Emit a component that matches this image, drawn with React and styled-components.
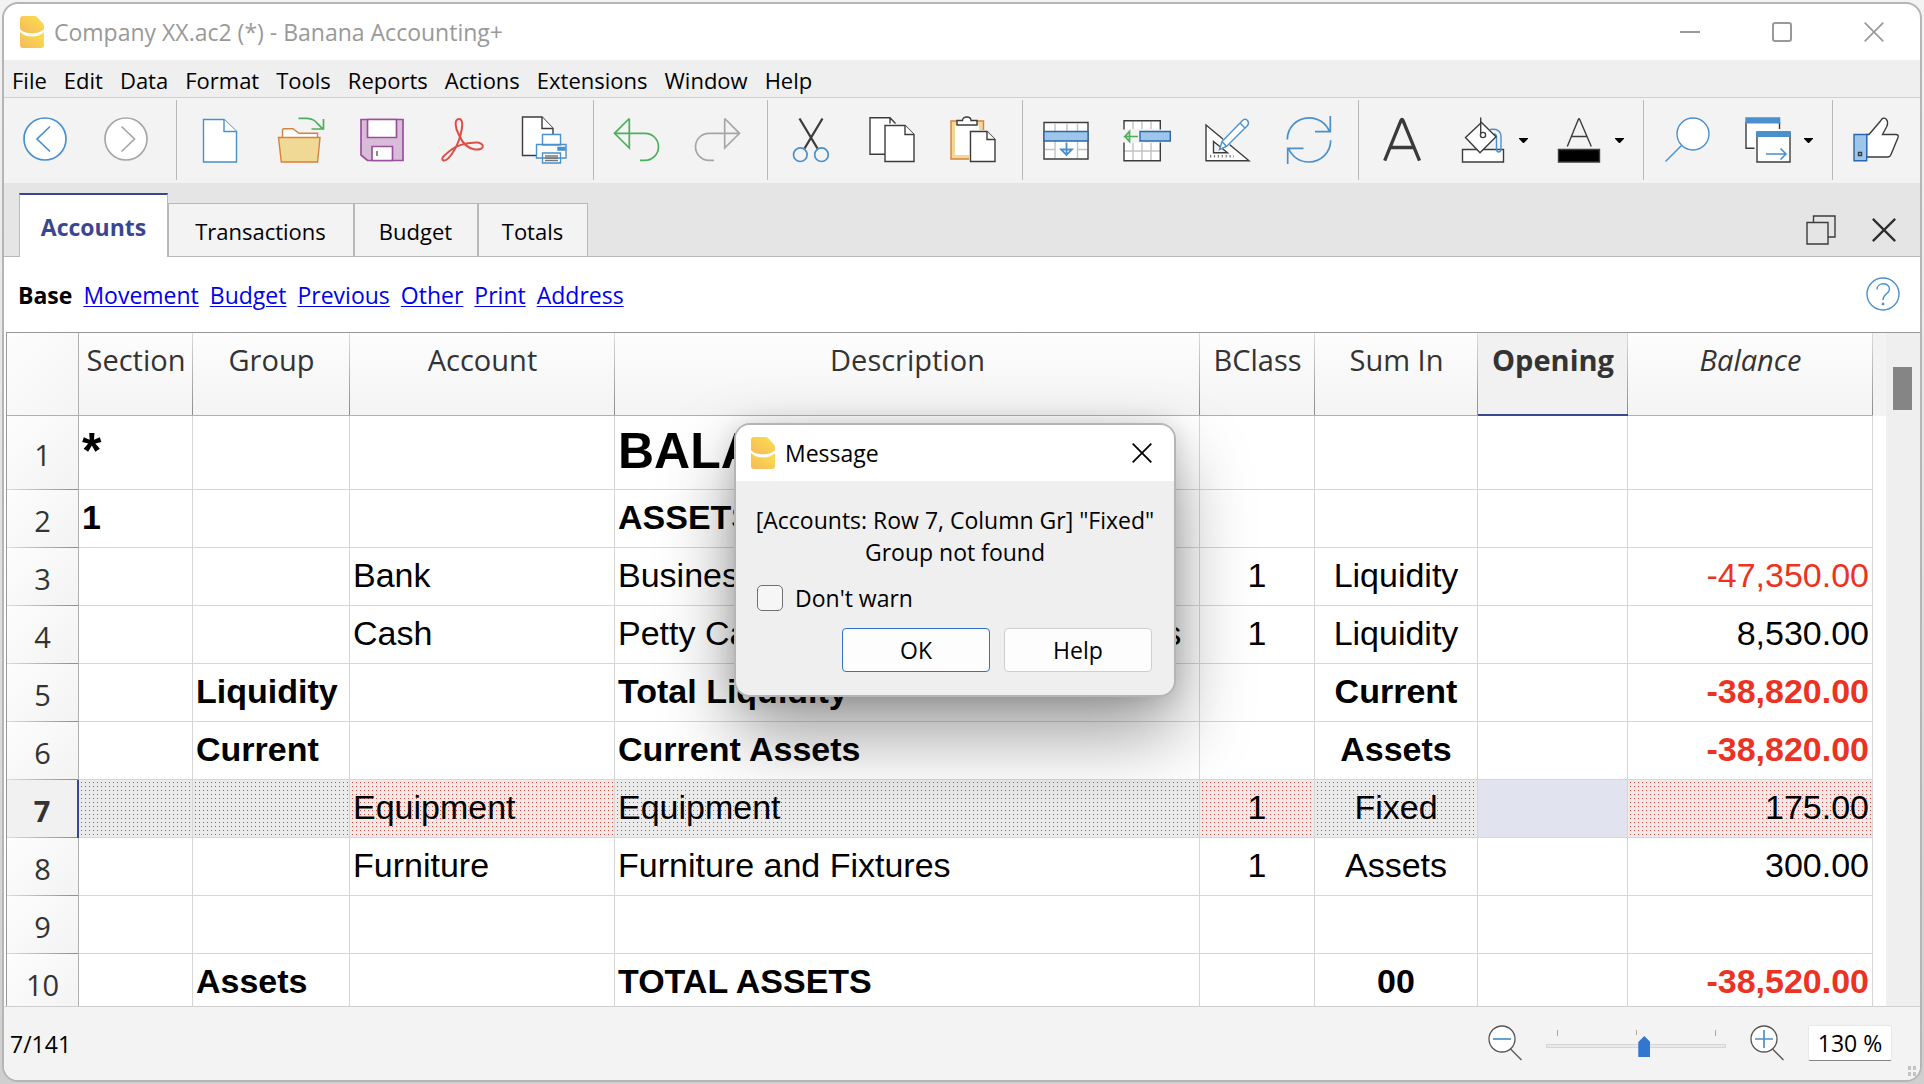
import React, { useState } from "react";
import styled, { createGlobalStyle, css } from "styled-components";

const UI = `"Open Sans", "Noto Sans", sans-serif`;
const SHEET = `"Liberation Sans", Arial, sans-serif`;
const BLUE = "#4a90cc";
const INK = "#3c3c3c";
const NAVY = "#3b4691";
const GREEN = "#4caf5c";
const GREY = "#a6a6a6";
const ORANGE = "#d9803c";

const Global = createGlobalStyle`
  *, *::before, *::after { box-sizing: border-box; }
  body { margin: 0; font-family: ${UI}; font-size: 23px; color: #000; }
  button, input { font: inherit; color: inherit; }
  button { background: none; border: 0; padding: 0; cursor: pointer; }
  svg { display: block; flex: none; }
`;

const Desktop = styled.div`
  height: 100vh;
  padding: 2px;
  background: linear-gradient(#f3f3f3, #cfcfcf);
`;

const Window = styled.div`
  position: relative;
  height: 100%;
  display: flex;
  flex-direction: column;
  overflow: hidden;
  border: 2px solid #b5b5b5;
  border-radius: 16px;
  background: #fff;
`;

const TitleBar = styled.header`
  display: flex;
  align-items: center;
  height: 56px;
  flex: none;
  padding-left: 16px;
  gap: 10px;
  color: #999;
`;

const Title = styled.h1`
  flex: 1;
  margin: 0;
  font-size: 23px;
  font-weight: 400;
  line-height: 32px;
`;

const Caption = styled.div`
  display: flex;
`;

const CaptionButton = styled.button`
  width: 92px;
  height: 54px;
  display: flex;
  align-items: center;
  justify-content: center;
`;

const MenuBar = styled.nav`
  display: flex;
  flex: none;
  height: 38px;
  gap: 17px;
  padding: 3px 8px 0;
  background: #efefef;
  border-bottom: 1px solid #cfcfcf;
`;

const MenuItem = styled.button`
  font-size: 22px;
  line-height: 34px;
`;

const Toolbar = styled.div`
  display: flex;
  flex: none;
  height: 85px;
  padding: 2px 0 3px;
  background: #f3f3f3;
`;

const ToolGroup = styled.div`
  display: flex;
  padding: 0 9px 0 2px;
  border-right: 1px solid #b9b9b9;
  &:first-child { padding: 0 10px 0 0; }
  &:last-child { border-right: 0; padding-right: 0; }
`;

const ToolButton = styled.button`
  display: flex;
  align-items: center;
  justify-content: center;
  width: 81px;
  ${(p) => p.$menu && css`
    width: 96px;
    justify-content: flex-start;
    padding-left: 17px;
    gap: 12px;
  `}
`;

const TabStrip = styled.div`
  display: flex;
  align-items: flex-end;
  flex: none;
  height: 74px;
  padding-left: 15px;
  background: linear-gradient(#b9b9b9, #b9b9b9) bottom / 100% 1px no-repeat #e5e5e5;
`;

const Tab = styled.button`
  height: 54px;
  width: ${(p) => p.$width}px;
  padding-top: 2px;
  font-size: 22px;
  background: #f3f3f3;
  border: 1px solid #b9b9b9;
  border-left-width: 0;
  box-shadow: inset 1px 0 #b9b9b9;
  ${(p) => p.$active && css`
    height: 64px;
    font-size: 23px;
    background: #fff;
    color: ${NAVY};
    font-weight: 700;
    border: 1px solid #b9b9b9;
    border-top: 2px solid ${NAVY};
    border-bottom: 0;
    box-shadow: none;
  `}
`;

const TabTools = styled.div`
  display: flex;
  align-items: center;
  gap: 36px;
  height: 54px;
  margin-left: auto;
  padding-right: 24px;
`;

const ViewBar = styled.nav`
  display: flex;
  align-items: center;
  flex: none;
  height: 75px;
  gap: 11px;
  padding: 0 20px 0 14px;
`;

const CurrentView = styled.strong`
  font-weight: 700;
`;

const ViewLink = styled.a`
  color: #00e;
  text-decoration: underline;
  text-decoration-thickness: 1px;
  text-underline-offset: 2px;
`;

const HelpButton = styled.button`
  margin-left: auto;
  margin-bottom: 2px;
`;

const Main = styled.main`
  display: flex;
  flex: 1;
  min-height: 0;
  margin-left: 2px;
  overflow: hidden;
  border-top: 1px solid #999;
  border-left: 1px solid #999;
`;

const SheetView = styled.div`
  flex: 1;
  min-width: 0;
  overflow: hidden;
`;

const Sheet = styled.table`
  width: 100%;
  table-layout: fixed;
  border-collapse: separate;
  border-spacing: 0;
`;

const Col = styled.col`
  width: ${(p) => (p.$width ? `${p.$width}px` : "auto")};
`;

const HeadCell = styled.th`
  height: 83px;
  padding: 7px 0 0;
  vertical-align: top;
  font-size: 29px;
  line-height: 40px;
  font-weight: ${(p) => (p.$selected ? 700 : 400)};
  font-style: ${(p) => (p.$italic ? "italic" : "normal")};
  color: #333;
  white-space: nowrap;
  border-bottom: ${(p) => (p.$selected ? `2px solid ${NAVY}` : "1px solid #b0b0b0")};
  background:
    linear-gradient(#dcdcdc, #8c8c8c) right / 1px 100% no-repeat,
    linear-gradient(${(p) => (p.$selected ? "#f1f1f1, #f1f1f1" : "#fdfdfd, #f4f4f4")});
`;

const CornerCell = styled.td`
  height: 83px;
  padding: 0;
  border-right: 1px solid #b0b0b0;
  border-bottom: 1px solid #b0b0b0;
  background: linear-gradient(135deg, #fdfdfd, #f4f4f4);
`;

const HeadFiller = styled.td`
  padding: 0;
  background: #f3f3f3;
`;

const Filler = styled.td`
  padding: 0;
`;

const RowHead = styled.th`
  height: ${(p) => (p.$tall ? 74 : 58)}px;
  padding: 3px 0 0;
  font-size: 29px;
  line-height: 40px;
  font-weight: ${(p) => (p.$selected ? 700 : 400)};
  color: #333;
  border-right: ${(p) => (p.$selected ? `2px solid ${NAVY}` : "1px solid #b0b0b0")};
  background:
    linear-gradient(90deg, #dcdcdc, #8c8c8c) bottom / 100% 1px no-repeat,
    linear-gradient(135deg, ${(p) => (p.$selected ? "#f1f1f1, #f1f1f1" : "#fdfdfd, #f3f3f3")});
`;

const Cell = styled.td`
  padding: 0 3px 3px;
  font-family: ${SHEET};
  font-size: ${(p) => (p.$tall ? 50 : 34)}px;
  line-height: ${(p) => (p.$tall ? 56 : 40)}px;
  font-weight: ${(p) => (p.$bold ? 700 : 400)};
  text-align: ${(p) => p.$align || "left"};
  color: ${(p) => (p.$negative ? "#ec3323" : "#000")};
  white-space: nowrap;
  overflow: hidden;
  border-right: 1px solid #d6d6d6;
  border-bottom: 1px solid #d6d6d6;
  ${(p) => p.$warned && css`
    background: conic-gradient(from 270deg at 1px 1px, #d94436 90deg, transparent 0)
      2px 2px / 4px 4px #ebebeb;
  `}
  ${(p) => p.$cursor && css`background: #e1e3ef;`}
`;

const ScrollTrack = styled.div`
  flex: none;
  width: 34px;
  padding: 34px 8px 0 7px;
  background: #efefef;
`;

const ScrollThumb = styled.div`
  height: 43px;
  background: #858585;
`;

const StatusBar = styled.footer`
  display: flex;
  align-items: center;
  flex: none;
  height: 74px;
  padding: 0 4px 0 6px;
  background: #f3f3f3;
  border-top: 1px solid #cfcfcf;
`;

const Position = styled.span`
  flex: 1;
`;

const ZoomTools = styled.div`
  display: flex;
  align-items: center;
  gap: 24px;
  padding-bottom: 1px;
`;

const ZoomSlider = styled.input`
  appearance: none;
  width: 180px;
  height: 34px;
  margin: 0;
  background:
    linear-gradient(#aaa797, #aaa797) 11px 4px / 1px 6px no-repeat,
    linear-gradient(#aaa797, #aaa797) 90px 4px / 1px 5px no-repeat,
    linear-gradient(#aaa797, #aaa797) 169px 4px / 1px 6px no-repeat;
  &::-webkit-slider-runnable-track {
    height: 4px;
    margin-top: 6px;
    background: #e7eaea;
    border: 1px solid #d6d6d6;
  }
  &::-webkit-slider-thumb {
    appearance: none;
    width: 12px;
    height: 21px;
    margin-top: -9px;
    background: #3276d0;
    clip-path: polygon(50% 0, 100% 28%, 100% 100%, 0 100%, 0 28%);
  }
`;

const ZoomValue = styled.input`
  width: 84px;
  height: 36px;
  padding: 0;
  text-align: center;
  background: #fff;
  border: 1px solid #e8e8e8;
  border-bottom: 1px solid #858585;
  border-radius: 2px;
`;

const Grip = styled.div`
  align-self: flex-end;
  width: 8px;
  height: 10px;
  margin: 0 0 4px 16px;
  background: conic-gradient(from 270deg at 3px 4px, #c4c4c4 90deg, transparent 0) 0 0 / 5px 6px;
`;

const Dialog = styled.section`
  position: absolute;
  top: 419px;
  left: calc(50% - 228px);
  width: 442px;
  border: 2px solid #b5b5b5;
  border-radius: 16px;
  background: #efefef;
  box-shadow: 0 36px 76px rgba(0, 0, 0, 0.4), 0 2px 24px rgba(0, 0, 0, 0.14);
`;

const DialogTitle = styled.header`
  display: flex;
  align-items: center;
  height: 56px;
  gap: 10px;
  padding: 0 22px 0 15px;
  background: #fff;
  border-radius: 14px 14px 0 0;
`;

const DialogName = styled.h2`
  flex: 1;
  margin: 0;
  font-size: 23px;
  font-weight: 400;
`;

const Message = styled.p`
  margin: 0;
  padding-top: 23px;
  text-align: center;
  line-height: 32px;
  white-space: pre-line;
`;

const CheckRow = styled.label`
  display: flex;
  align-items: center;
  gap: 12px;
  padding: 14px 0 0 21px;
  line-height: 32px;
`;

const CheckBox = styled.input`
  appearance: none;
  width: 26px;
  height: 26px;
  margin: 0;
  border: 1px solid #707070;
  border-radius: 5px;
  background: #f6f6f6;
  &:checked { background: #3276d0; }
`;

const Actions = styled.div`
  display: flex;
  justify-content: flex-end;
  gap: 14px;
  padding: 14px 22px 23px;
`;

const ActionButton = styled.button`
  width: 148px;
  height: 44px;
  background: #fdfdfd;
  border: 1px solid ${(p) => (p.$default ? "#2f74cc" : "#cfcfcf")};
  border-radius: 4px;
`;

/* ---------- drawings ---------- */

const Icon = ({ children, size = 48 }) => (
  <svg width={size} height={size} viewBox={`0 0 ${size} ${size}`} fill="none" strokeWidth="1.4" aria-hidden="true">
    {children}
  </svg>
);

const Logo = () => (
  <svg width="24" height="32" viewBox="0 0 24 32" aria-hidden="true">
    <defs>
      <linearGradient id="logoFill" x1="1" y1="0" x2="0" y2="1">
        <stop offset="0" stopColor="#fbe04c" />
        <stop offset="1" stopColor="#f5b95c" />
      </linearGradient>
    </defs>
    <path fill="url(#logoFill)" d="M3 0H14.500Q16 0 17 1L23 7.500Q24 8.500 24 10V13C20 18.500 5 19 0 13V3Q0 0 3 0Z" />
    <path fill="url(#logoFill)" d="M0 16C6 22 18 22 24 16V29Q24 32 21 32H3Q0 32 0 29Z" />
  </svg>
);

const Cross = ({ size, stroke, width = 2 }) => (
  <svg width={size} height={size} viewBox="0 0 20 20" aria-hidden="true">
    <path d="M.7 .7 19.300 19.300M19.300 .7 .7 19.300" stroke={stroke} strokeWidth={width} fill="none" />
  </svg>
);

const Caret = () => (
  <svg width="9" height="5" viewBox="0 0 9 5" aria-hidden="true"><path d="M0 0H9V.7L5 5H4L0 .7Z" fill="#000" /></svg>
);

const Sheetlet = ({ x1, y1, x2, y2, fx, fy, stroke = INK }) => (
  <g fill="#fff" stroke={stroke}>
    <path d={`M${x1} ${y1}H${fx}L${x2} ${fy}V${y2}H${x1}Z`} />
    <path d={`M${fx} ${y1}V${fy}H${x2}`} />
  </g>
);

const icons = {
  Back: (
    <g stroke={BLUE} strokeWidth="1.700"><circle cx="24" cy="23" r="21" fill="#fff" /><path d="M29 10.500 16 23 29 35.500" /></g>
  ),
  Forward: (
    <g stroke={GREY} strokeWidth="1.700"><circle cx="24" cy="23" r="21" fill="#fff" /><path d="M19.500 10.500 32.500 23 19.500 35.500" /></g>
  ),
  New: <Sheetlet x1={7.5} y1={3.5} x2={40.5} y2={46} fx={28} fy={15.5} stroke={BLUE} />,
  Open: (
    <g stroke={ORANGE}>
      <path fill="#fff" d="M5.500 22V14Q5.500 12.700 7 12.700H16L22 17.300H40.500V22" />
      <path fill="#f0d995" d="M1.500 21.500H43L40.600 46H4.300Z" />
      <path stroke={GREEN} strokeWidth="1.700" d="M21.500 2.300H30C38 2.300 40 8 46 13M46.500 3V13H34.500" />
    </g>
  ),
  Save: (
    <g stroke="#9a4f9c" strokeWidth="1.700">
      <path fill="#d9bcd9" d="M3 3.500H45V44.500H9.500L3 39Z" />
      <path fill="#fff" d="M9.500 3.500H38.500V21.500H9.500ZM14 44.500V30.500H34.500V44.500Z" />
      <path stroke="#777" d="M19 35V40" />
    </g>
  ),
  PDF: (
    <path stroke="#e04f46" strokeWidth="2" d="M20 3C15 3 16 12 20 19C23 26 28 32.500 36 33.500C47 34.500 45.500 26 37 26.500C28 27 17 29.500 12 34C4 40 1.500 43 4.500 44.500C9 45.500 17 33 20 24C23.500 13 25 3 20 3Z" />
  ),
  Print: (
    <g>
      <Sheetlet x1={2.5} y1={1} x2={33} y2={39.5} fx={22} fy={12.5} />
      <g stroke={BLUE} fill="#fff">
        <path d="M22.500 18.500H40.500V29H22.500ZM16.500 28.500H46V42H16.500ZM22.500 37H40.500V47H22.500Z" />
        <path fill={BLUE} d="M38 31.500H45V34H38Z" />
        <path stroke="#777" d="M25 40H38M25 42.300H38M25 44.500H38" />
      </g>
    </g>
  ),
  Undo: <path stroke={GREEN} strokeWidth="1.700" d="M16.300 2.500 1.500 17.300 16.300 32V2.500M1.500 17.300H32A13.500 13.500 0 0 1 32 44.300H27" />,
  Redo: <path stroke={GREY} strokeWidth="1.700" d="M30.700 2.500 45.500 17.300 30.700 32V2.500M45.500 17.300H15A13.500 13.500 0 0 0 15 44.300H20" />,
  Cut: (
    <g>
      <path stroke={INK} strokeWidth="2.300" d="M12.500 2.500 30.500 32.500M35.500 2.500 17.500 32.500" />
      <g stroke={BLUE} strokeWidth="1.700"><circle cx="13.300" cy="38.700" r="6.800" /><circle cx="34.500" cy="38.700" r="6.800" /></g>
    </g>
  ),
  Copy: (
    <g>
      <path stroke={INK} fill="#fff" d="M17 38.300H2V1.700H22L27.500 7.500M22 1.700V7.500" />
      <path fill="#fff" d="M3 3H21V9H17V37H3Z" />
      <Sheetlet x1={17} y1={9.5} x2={46} y2={45.5} fx={37} fy={18.5} />
    </g>
  ),
  Paste: (
    <g>
      <path stroke={ORANGE} fill="#f0d995" d="M2 5H34.500V43H2Z" />
      <path fill="#fff" d="M6 9H30V39H6Z" />
      <path stroke={INK} fill="#fff" d="M8 9V4.500H13.500C13.500-.2 22-.2 22 4.500H28V9Z" />
      <path fill="#f3f3f3" d="M20 14H48V47H20Z" />
      <Sheetlet x1={21.5} y1={15.5} x2={46} y2={45.5} fx={38} fy={23.5} />
    </g>
  ),
  InsertRow: (
    <g>
      <path fill="#fff" stroke={INK} d="M2 6.500H46V43H2Z" />
      <path stroke="#c2c2c2" d="M13 7.500V16M25 7.500V16M35.500 7.500V16M13 25V42M35.500 25V42M3 33.500H13M35.500 33.500H45" />
      <path fill="#9dc6ea" stroke="#2b67b1" d="M2 15.500H46V25H2Z" />
      <path stroke={BLUE} strokeWidth="1.800" d="M24.500 26.500V39M19 33.500H30L24.500 39Z" />
    </g>
  ),
  DeleteRow: (
    <g>
      <path fill="#fff" d="M1 5H37V13H1ZM1 27H37V44H1Z" />
      <path stroke="#c2c2c2" d="M10 5.500V13M19 5.500V13M28 5.500V13M10 27V44M19 27V44M28 27V44M1 35H37" />
      <path stroke={INK} d="M1 13.500V4.700H37.300V13.500M1 26.500V44.700H37.300V26.500" />
      <path fill="#9dc6ea" stroke="#2b67b1" d="M17 15.500H47.300V25H17Z" />
      <path stroke={GREEN} strokeWidth="1.700" d="M15 20.500H2L6.500 15.500V25.500L2 20.500" />
    </g>
  ),
  Design: (
    <g>
      <path stroke={INK} fill="#fff" d="M2 9 45 44.700H2ZM9.500 25.500V36.700H23.500Z" />
      <path stroke="#777" strokeWidth="2.500" strokeDasharray="1.200 2.700" d="M6 40.300H30" />
      <path stroke="#f3f3f3" strokeWidth="9" d="M22 26 38 9" />
      <path stroke={BLUE} fill="#fff" d="M15.500 33.500 18 25.500 38.500 4.500Q41 2 43.500 4.500 45.500 7 43.500 9.500L22.500 30.500ZM36 7 41 12M18 25.500 22.500 30.500" />
    </g>
  ),
  Refresh: (
    <path
      stroke={BLUE}
      strokeWidth="1.700"
      d="M2.300 23.500A21.700 21.700 0 0 1 24 1.800A21.700 21.700 0 0 1 44.500 15.700M45.300 0V15.700H30M45.700 24.300A21.700 21.700 0 0 1 24 46A21.700 21.700 0 0 1 3.500 32.300M2.700 48V32.300H18.500"
    />
  ),
  Font: <path stroke="#3a3a3a" strokeWidth="3.300" d="M6.700 44.700 23 4.500Q24 2.500 25 4.500L41.500 44.700M13 31.500H35.500" />,
  Fill: (
    <g>
      <path stroke={INK} fill="#fff" d="M3.500 33.500H44.500V46H3.500Z" />
      <path stroke={BLUE} d="M31 13.500Q42 12 42 21V33Q42 36 39.700 36 37.500 36 37.500 33V21Q37.500 18 35 18" />
      <path stroke={INK} fill="#fff" d="M22.500 6.500 37 20.700 21 36.700 6.500 21.500Z" />
      <path stroke={INK} d="M21.700 1.500V17" /><circle cx="24" cy="19" r="2.600" stroke={INK} />
    </g>
  ),
  TextColor: (
    <g>
      <path stroke={INK} d="M12.300 30.500 23.300 3.500Q24 2 24.700 3.500L36.300 30.500M16.500 20.500H32" />
      <path fill="#000" stroke={INK} d="M3.500 33.500H44.500V46H3.500Z" />
    </g>
  ),
  Find: <g stroke={BLUE}><circle cx="30" cy="18" r="16" fill="#fff" /><path d="M18.500 29.500 2.500 45.500" /></g>,
  Windows: (
    <g>
      <path fill="#fff" d="M2 2H35V16H12V32H2Z" />
      <path stroke={INK} d="M10.500 32.300H2V6M35.500 6V13" />
      <path fill={BLUE} d="M1.300 1.300H36.300V7.500H1.300Z" />
      <path stroke={INK} fill="#fff" d="M13 17H46V46H13Z" />
      <path fill={BLUE} d="M12.300 15H46.700V21H12.300Z" />
      <path stroke={BLUE} strokeWidth="1.600" d="M22 38H42M36.500 32.500 42 38 36.500 43.500" />
    </g>
  ),
  Like: (
    <g>
      <path stroke={INK} fill="#fff" d="M14.500 18.500H17L28.500 5Q31 .5 34 3 37 6 34.500 11L30.500 18.500H44Q47 18.500 46 21.500L39 38.500Q38 41 36 41H14.500Z" />
      <path fill="#9dc6ea" stroke="#2b67b1" d="M2 18.500H14.700V44.700H2Z" />
      <path stroke={INK} d="M6.500 36.500H9.500V39.500H6.500Z" />
    </g>
  ),
};

const Magnifier = ({ plus }) => (
  <svg width="34" height="36" viewBox="0 0 34 36" fill="none" aria-hidden="true">
    <circle cx="14" cy="14" r="13" fill="#fff" stroke="#555" strokeWidth="1.300" />
    <path stroke="#555" strokeWidth="1.300" d="M22.500 24 33.500 35" />
    <path stroke={BLUE} strokeWidth="1.700" d={plus ? "M5 14H23M14 5V23" : "M5 14H23"} />
  </svg>
);

/* ---------- data ---------- */

const menus = ["File", "Edit", "Data", "Format", "Tools", "Reports", "Actions", "Extensions", "Window", "Help"];

const toolGroups = [
  ["Back", "Forward"],
  ["New", "Open", "Save", "PDF", "Print"],
  ["Undo", "Redo"],
  ["Cut", "Copy", "Paste"],
  ["InsertRow", "DeleteRow", "Design", "Refresh"],
  ["Font", "Fill", "TextColor"],
  ["Find", "Windows"],
  ["Like"],
];
const withMenu = ["Fill", "TextColor", "Windows"];

const tabs = [["Accounts", 149], ["Transactions", 186], ["Budget", 124], ["Totals", 110]];
const views = ["Movement", "Budget", "Previous", "Other", "Print", "Address"];

const columns = [
  { name: "Section", width: 114 },
  { name: "Group", width: 157 },
  { name: "Account", width: 265 },
  { name: "Description" },
  { name: "BClass", width: 115, align: "center" },
  { name: "Sum In", width: 163, align: "center" },
  { name: "Opening", width: 150, align: "right" },
  { name: "Balance", width: 245, align: "right" },
];

const rows = [
  { bold: true, tall: true, cells: ["*", "", "", "BALANCE", "", "", "", ""] },
  { bold: true, cells: ["1", "", "", "ASSETS", "", "", "", ""] },
  { cells: ["", "", "Bank", "Business Bank Account", "1", "Liquidity", "", "-47,350.00"] },
  { cells: ["", "", "Cash", "Petty Cash and Other Cash Accounts", "1", "Liquidity", "", "8,530.00"] },
  { bold: true, cells: ["", "Liquidity", "", "Total Liquidity", "", "Current", "", "-38,820.00"] },
  { bold: true, cells: ["", "Current", "", "Current Assets", "", "Assets", "", "-38,820.00"] },
  { warned: true, cells: ["", "", "Equipment", "Equipment", "1", "Fixed", "", "175.00"] },
  { cells: ["", "", "Furniture", "Furniture and Fixtures", "1", "Assets", "", "300.00"] },
  { cells: ["", "", "", "", "", "", "", ""] },
  { bold: true, cells: ["", "Assets", "", "TOTAL ASSETS", "", "00", "", "-38,520.00"] },
];

export default function App() {
  const [zoom, setZoom] = useState(55);
  const [muted, setMuted] = useState(false);

  return (
    <Desktop>
      <Global />
      <Window>
        <TitleBar>
          <Logo />
          <Title>Company XX.ac2 (*) - Banana Accounting+</Title>
          <Caption>
            <CaptionButton aria-label="Minimize">
              <Icon size={20}><path d="M0 10H20" stroke="#999" strokeWidth="2" /></Icon>
            </CaptionButton>
            <CaptionButton aria-label="Maximize">
              <Icon size={20}><rect x="1" y="1" width="18" height="18" rx="2" stroke="#999" strokeWidth="2" /></Icon>
            </CaptionButton>
            <CaptionButton aria-label="Close"><Cross size={20} stroke="#999" width={1.7} /></CaptionButton>
          </Caption>
        </TitleBar>

        <MenuBar>
          {menus.map((m) => <MenuItem key={m}>{m}</MenuItem>)}
        </MenuBar>

        <Toolbar role="toolbar">
          {toolGroups.map((group) => (
            <ToolGroup key={group[0]}>
              {group.map((name) => (
                <ToolButton key={name} aria-label={name} $menu={withMenu.includes(name)}>
                  <Icon>{icons[name]}</Icon>
                  {withMenu.includes(name) && <Caret />}
                </ToolButton>
              ))}
            </ToolGroup>
          ))}
        </Toolbar>

        <TabStrip role="tablist">
          {tabs.map(([name, width], i) => (
            <Tab key={name} role="tab" aria-selected={i === 0} $active={i === 0} $width={width}>{name}</Tab>
          ))}
          <TabTools>
            <button aria-label="Restore">
              <Icon size={30}>
                <path stroke={INK} d="M7.500 7.500V1H29V22H22M1 7.500H22V29H1Z" />
              </Icon>
            </button>
            <button aria-label="Close table"><Cross size={24} stroke="#2e2e2e" width={1.9} /></button>
          </TabTools>
        </TabStrip>

        <ViewBar>
          <CurrentView>Base</CurrentView>
          {views.map((v) => <ViewLink key={v} href={`#${v}`}>{v}</ViewLink>)}
          <HelpButton aria-label="Help">
            <Icon size={34}>
              <g stroke={BLUE}>
                <circle cx="17" cy="17" r="16" />
                <path d="M11 12.500C11 5 23.500 5 23.500 12 23.500 17 17 16.500 17 23" />
                <path strokeWidth="2.500" d="M17 25.700V28.200" />
              </g>
            </Icon>
          </HelpButton>
        </ViewBar>

        <Main>
          <SheetView>
            <Sheet>
              <colgroup>
                <Col $width={72} />
                {columns.map((c) => <Col key={c.name} $width={c.width} />)}
                <Col $width={13} />
              </colgroup>
              <thead>
                <tr>
                  <CornerCell />
                  {columns.map((c) => (
                    <HeadCell key={c.name} scope="col" $selected={c.name === "Opening"} $italic={c.name === "Balance"}>
                      {c.name}
                    </HeadCell>
                  ))}
                  <HeadFiller />
                </tr>
              </thead>
              <tbody>
                {rows.map((row, r) => (
                  <tr key={r}>
                    <RowHead scope="row" $tall={row.tall} $selected={row.warned}>{r + 1}</RowHead>
                    {row.cells.map((text, c) => (
                      <Cell
                        key={c}
                        $tall={row.tall}
                        $bold={row.bold}
                        $align={columns[c].align}
                        $negative={c === 7 && text.startsWith("-")}
                        $warned={row.warned && c !== 6}
                        $cursor={row.warned && c === 6}
                      >
                        {text}
                      </Cell>
                    ))}
                    <Filler />
                  </tr>
                ))}
              </tbody>
            </Sheet>
          </SheetView>
          <ScrollTrack><ScrollThumb /></ScrollTrack>
        </Main>

        <StatusBar>
          <Position>7/141</Position>
          <ZoomTools>
            <button aria-label="Zoom out"><Magnifier /></button>
            <ZoomSlider type="range" aria-label="Zoom" value={zoom} onChange={(e) => setZoom(+e.target.value)} />
            <button aria-label="Zoom in"><Magnifier plus /></button>
            <ZoomValue type="text" aria-label="Zoom level" defaultValue="130 %" />
          </ZoomTools>
          <Grip />
        </StatusBar>

        <Dialog role="dialog" aria-labelledby="dialog-name">
          <DialogTitle>
            <Logo />
            <DialogName id="dialog-name">Message</DialogName>
            <button aria-label="Close message"><Cross size={20} stroke="#000" width={1.8} /></button>
          </DialogTitle>
          <Message>{'[Accounts: Row 7, Column Gr] "Fixed"\nGroup not found'}</Message>
          <CheckRow>
            <CheckBox type="checkbox" checked={muted} onChange={(e) => setMuted(e.target.checked)} />
            Don't warn
          </CheckRow>
          <Actions>
            <ActionButton $default>OK</ActionButton>
            <ActionButton>Help</ActionButton>
          </Actions>
        </Dialog>
      </Window>
    </Desktop>
  );
}
